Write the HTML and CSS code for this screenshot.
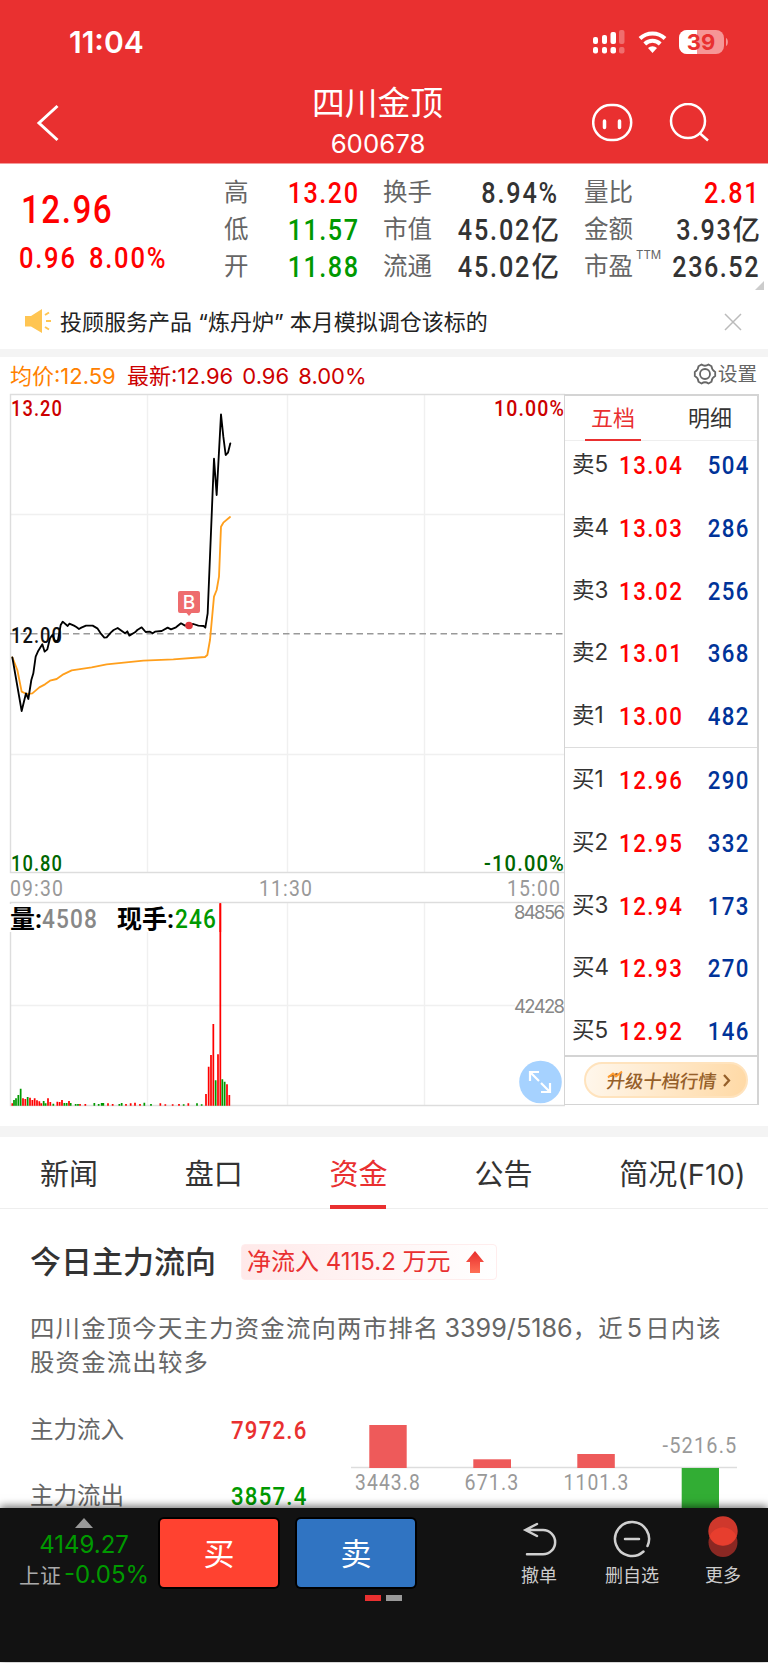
FILE: index.html
```html
<!DOCTYPE html>
<html lang="zh-CN">
<head>
    <meta charset="UTF-8">
    <meta name="viewport" content="width=device-width, initial-scale=1.0">
    <title>四川金顶 600678</title>
    <link rel="stylesheet" href="styles.css">
</head>
<body>
    <header class="header">
        <div class="status">
            <span class="time">11:04</span>
            <svg class="status-icons" width="136" height="26" viewBox="593 29 136 26">
                <g fill="#fff">
                    <rect x="593" y="37" width="5" height="7" rx="2"/>
                    <rect x="602" y="35" width="5" height="9" rx="2"/>
                    <rect x="610.500" y="32" width="5.500" height="12" rx="2"/>
                    <rect x="619" y="30" width="5.500" height="14" rx="2" opacity=".3"/>
                    <rect x="593" y="47" width="5" height="6.500" rx="2"/>
                    <rect x="602" y="47" width="5" height="6.500" rx="2"/>
                    <rect x="610.500" y="47" width="5.500" height="6.500" rx="2"/>
                    <rect x="619" y="47" width="5.500" height="6.500" rx="2" opacity=".3"/>
                    <path d="M652.500 53l-4.500-5a6.500 6.500 0 0 1 9 0z"/>
                </g>
                <path d="M640 38.500a18 18 0 0 1 25 0M644.800 44a11 11 0 0 1 15.400 0" fill="none" stroke="#fff" stroke-width="4"/>
                <rect x="679" y="30" width="45" height="24" rx="8" fill="#f69696"/>
                <path d="M697 30h-10a8 8 0 0 0-8 8v8a8 8 0 0 0 8 8h10z" fill="#fff"/>
                <path d="M726 38c2.500 1 2.500 7 0 8z" fill="#f69696"/>
                <text x="701" y="50" class="battery" text-anchor="middle">39</text>
            </svg>
        </div>
        <div class="nav">
            <svg class="back" width="24" height="38" viewBox="0 0 24 38"><path d="M21.500 2L3 19l18.500 17" fill="none" stroke="#fff" stroke-width="3"/></svg>
            <div class="stock">
                <h1>四川金顶</h1>
                <span>600678</span>
            </div>
            <svg class="nav-icons" width="118" height="40" viewBox="592 103 118 40" fill="none" stroke="#fff" stroke-width="2.500">
                <rect x="593.200" y="105" width="38" height="35" rx="17.500"/>
                <path d="M604.500 121v6.500M619.500 121v6.500" stroke-width="3.500" stroke-linecap="round"/>
                <circle cx="688" cy="121" r="17"/>
                <path d="M699.500 133l8.500 7.500"/>
            </svg>
        </div>
    </header>

    <section class="quote">
        <div class="price">
            <div class="last din">12.96</div>
            <div class="change"><span class="din">0.96</span><span class="din">8.00%</span></div>
        </div>
        <dl class="stats stats-a">
            <dt>高</dt><dd class="din up">13.20</dd>
            <dt>低</dt><dd class="din down">11.57</dd>
            <dt>开</dt><dd class="din down">11.88</dd>
        </dl>
        <dl class="stats stats-b">
            <dt>换手</dt><dd class="din">8.94%</dd>
            <dt>市值</dt><dd class="din">45.02<i>亿</i></dd>
            <dt>流通</dt><dd class="din">45.02<i>亿</i></dd>
        </dl>
        <dl class="stats stats-c">
            <dt>量比</dt><dd class="din up">2.81</dd>
            <dt>金额</dt><dd class="din">3.93<i>亿</i></dd>
            <dt>市盈<sup>TTM</sup></dt><dd class="din">236.52</dd>
        </dl>
        <span class="corner"></span>
    </section>

    <div class="notice">
        <svg width="28" height="26" viewBox="0 0 28 26">
            <path d="M1 7h6l11-7v24l-11-6.500H1z" fill="#ffc552"/>
            <path d="M21 6l4-2.500M22 12h5M21 18l4 2.500" stroke="#ffc552" stroke-width="2"/>
        </svg>
        <p>投顾服务产品 “炼丹炉” 本月模拟调仓该标的</p>
        <svg width="18" height="18" viewBox="0 0 18 18"><path d="M1 1l16 16M17 1L1 17" stroke="#bbb" stroke-width="1.500"/></svg>
    </div>

    <div class="infobar">
        <span class="avg">均价:12.59</span>
        <span class="now">最新:12.96&nbsp; 0.96&nbsp; 8.00%</span>
        <span class="settings">
            <svg width="24" height="24" viewBox="0 0 24 24" fill="none" stroke="#666" stroke-width="1.800">
                <path d="M8.500 2.500q3.500 2.500 7 0l3 1.800q.3 4 3.700 5.700v4q-3.400 1.700-3.700 5.700l-3 1.800q-3.500-2.500-7 0l-3-1.800q-.3-4-3.700-5.700v-4q3.400-1.700 3.700-5.700z"/>
                <circle cx="12" cy="12" r="5"/>
            </svg>
            设置
        </span>
    </div>

    <section class="market">
        <svg class="chart" width="564" height="714" viewBox="0 393 564 714">
            <g class="grid">
                <path d="M147.500 394v479M287.500 394v479M424.500 394v479M10 514.500h555M10 754.500h555M147.500 902v204M287.500 902v204M424.500 902v204M10 1005.500h505"/>
                <path class="frame" d="M565 394.500H10.500V872.500H565M565 902.500H10.500V1105.500H565"/>
            </g>
            <path d="M10 633.800H565" stroke="#999" stroke-width="1.500" stroke-dasharray="6.500 4"/>

            <g class="axis">
                <text x="11" y="416" textLength="52" lengthAdjust="spacingAndGlyphs" fill="#c00">13.20</text>
                <text x="494" y="416" textLength="71" lengthAdjust="spacingAndGlyphs" fill="#c00">10.00%</text>
                <text x="11" y="643" textLength="52" lengthAdjust="spacingAndGlyphs" fill="#111">12.00</text>
                <text x="11" y="870.500" textLength="52" lengthAdjust="spacingAndGlyphs" fill="#060">10.80</text>
                <text x="484" y="870.500" textLength="81" lengthAdjust="spacingAndGlyphs" fill="#060">-10.00%</text>
            </g>
            <g class="axis hours">
                <text x="10" y="896" textLength="54" lengthAdjust="spacingAndGlyphs">09:30</text>
                <text x="259" y="896" textLength="54" lengthAdjust="spacingAndGlyphs">11:30</text>
                <text x="507" y="896" textLength="54" lengthAdjust="spacingAndGlyphs">15:00</text>
            </g>

            <!-- average and price lines -->
            <g transform="translate(0 380) scale(.33333)" fill="none" stroke-width="5.500" stroke-linejoin="round" stroke-linecap="round">
                <path stroke="#ff9f1c" d="M37 832L52 870L65 935L80 942L97 940L118 922L135 913L150 902L170 897L190 883L215 871L275 862L320 853L430 842L520 838L615 831L622 825L630 780L642 650L650 630L657 590L663 440L670 428L690 411"/>
                <path stroke="#000" d="M37 832L65 993L78 940L85 957L94 900L100 880L107 830L115 812L127 793L134 815L142 808L150 775L157 765L166 785L174 780L182 735L188 725L203 738L208 731L222 737L229 741L237 747L244 743L258 737H278L292 745L302 760L313 773L320 772L333 757L341 750L353 744L375 760L382 754L388 767L405 757L412 750L425 742L437 756L450 755L458 760L465 755L485 753L503 743L513 748L528 742L543 730L555 737L568 735L580 732L595 737L611 738L616 743L623 700L642 236L650 345L663 103L670 170L677 225L684 218L691 190"/>
            </g>
            <circle cx="189" cy="625.500" r="3.800" fill="#e03a40"/>
            <path d="M180 591h18q2 0 2 2v18q0 2-2 2h-6.500l-2.500 3-2.500-3H180q-2 0-2-2v-18q0-2 2-2z" fill="#ee6c6e"/>
            <text x="189" y="609" class="marker" text-anchor="middle">B</text>

            <!-- volume -->
            <rect x="9" y="904" width="209" height="28" fill="#fff"/>
            <text x="10" y="928" class="vol"><tspan class="cn">量:</tspan></text>
            <text x="42" y="927.500" class="vol num-part" textLength="56" lengthAdjust="spacingAndGlyphs" fill="#888">4508</text>
            <text x="117" y="928" class="vol"><tspan class="cn">现手:</tspan></text>
            <text x="175" y="927.500" class="vol num-part" textLength="42" lengthAdjust="spacingAndGlyphs" fill="#090">246</text>
            <path d="M220.300 903.300V932" stroke="#f00" stroke-width="1.700"/>
            <text x="514" y="919" class="scale" textLength="51">84856</text>
            <text x="514" y="1013" class="scale" textLength="51">42428</text>
            <g transform="translate(0 840) scale(.33333)" stroke-width="5.200">
                <path stroke="#f00" d="M37 797V790M69 797V775M76 797V777M90 797V773M97 797V780M104 797V775M111 797V781M118 797V784M124 797V790M144 797V775M151 797V786M172 797V785M179 797V786M186 797V780M207 797V783M240 797V792M256 797V792M324 797V790M338 797V792M378 797V792M392 797V790M405 797V788M420 797V792M481 797V790M496 797V793M518 797V793M537 797V792M565 797V790M618 797V762M626 797V680M633 797V645M640 797V552M654 797V643M661 797V190M681 797V733M688 797V765"/>
                <path stroke="#090" d="M42 797V780M48 797V775M55 797V765M62 797V746M83 797V771M131 797V783M137 797V790M160 797V791M193 797V789M200 797V789M212 797V789M227 797V792M234 797V792M283 797V789M296 797V792M305 797V789M310 797V789M358 797V792M365 797V789M433 797V788M453 797V792M551 797V793M591 797V790M605 797V793M647 797V721M667 797V718M674 797V725"/>
            </g>

            <circle cx="540.500" cy="1082" r="21.300" fill="#a6d2ff"/>
            <path d="M530 1081v-9h9M530 1072l9 9M541 1083l9 9M541 1092h9v-9" fill="none" stroke="#fff" stroke-width="2.200"/>
        </svg>

        <div class="book">
            <div class="book-tabs"><span class="active">五档</span><span>明细</span></div>
            <ul class="asks">
                <li><span>卖5</span><b class="din">13.04</b><em class="din">504</em></li>
                <li><span>卖4</span><b class="din">13.03</b><em class="din">286</em></li>
                <li><span>卖3</span><b class="din">13.02</b><em class="din">256</em></li>
                <li><span>卖2</span><b class="din">13.01</b><em class="din">368</em></li>
                <li><span>卖1</span><b class="din">13.00</b><em class="din">482</em></li>
            </ul>
            <ul class="bids">
                <li><span>买1</span><b class="din">12.96</b><em class="din">290</em></li>
                <li><span>买2</span><b class="din">12.95</b><em class="din">332</em></li>
                <li><span>买3</span><b class="din">12.94</b><em class="din">173</em></li>
                <li><span>买4</span><b class="din">12.93</b><em class="din">270</em></li>
                <li><span>买5</span><b class="din">12.92</b><em class="din">146</em></li>
            </ul>
            <div class="upgrade">
                <div class="upgrade-btn">
                    <span>升级十档行情</span>
                    <svg width="8" height="13" viewBox="0 0 8 13"><path d="M1 1l5 5.500-5 5.500" fill="none" stroke="#96602a" stroke-width="2.300"/></svg>
                    <svg class="spark" width="17" height="9" viewBox="0 0 17 9"><path d="M1 7.500l5-4 3 3 6-5" fill="none" stroke="#ff9a2e" stroke-width="2"/></svg>
                </div>
            </div>
        </div>
    </section>

    <nav class="tabs">
        <span>新闻</span>
        <span>盘口</span>
        <span class="active">资金</span>
        <span>公告</span>
        <span>简况(F10)</span>
    </nav>

    <section class="flow">
        <div class="flow-head">
            <h2>今日主力流向</h2>
            <div class="badge">
                <span>净流入 4115.2 万元</span>
                <svg width="20" height="24" viewBox="0 0 20 24">
                    <defs><linearGradient id="arrow" x2="0" y2="1"><stop stop-color="#e82c2c"/><stop offset="1" stop-color="#ff6f55"/></linearGradient></defs>
                    <path d="M10 1l9 11h-4v11H5V12H1z" fill="url(#arrow)"/>
                </svg>
            </div>
        </div>
        <p class="summary">四川金顶今天主力资金流向两市排名<span class="num">3399/5186</span>，近<span class="num five">5</span>日内该<br>股资金流出较多</p>
        <div class="flow-body">
            <div class="flow-rows">
                <div class="flow-row"><span>主力流入</span><b class="din in">7972.6</b></div>
                <div class="flow-row"><span>主力流出</span><b class="din out">3857.4</b></div>
            </div>
            <svg class="bars" width="388" height="100" viewBox="351 1410 388 100">
                <path d="M352 1468.500h386" stroke="#ddd" stroke-width="1.500"/>
                <g fill="#ee5a5a">
                    <rect x="370.300" y="1426" width="37.400" height="43"/>
                    <rect x="474.300" y="1460.300" width="37.700" height="8.700"/>
                    <rect x="578.300" y="1455" width="37.500" height="14"/>
                </g>
                <rect x="682.700" y="1469" width="37.300" height="41" fill="#32ad34"/>
                <g class="axis hours">
                    <text x="356" y="1491" textLength="66" lengthAdjust="spacingAndGlyphs">3443.8</text>
                    <text x="465.500" y="1491" textLength="55" lengthAdjust="spacingAndGlyphs">671.3</text>
                    <text x="564.500" y="1491" textLength="66" lengthAdjust="spacingAndGlyphs">1101.3</text>
                    <text x="663.500" y="1454" textLength="75" lengthAdjust="spacingAndGlyphs">-5216.5</text>
                </g>
            </svg>
        </div>
    </section>

    <footer class="toolbar">
        <div class="index">
            <svg width="18" height="10" viewBox="0 0 18 10"><path d="M9 0l9 10H0z" fill="#999"/></svg>
            <div class="index-value">4149.27</div>
            <div class="index-change"><span>上证</span>-0.05%</div>
        </div>
        <div class="trade buy">买</div>
        <div class="trade sell">卖</div>
        <div class="tool undo">
            <svg width="40" height="40" viewBox="0 0 40 40" fill="none" stroke="#d0d0d0" stroke-width="2.500" stroke-linecap="round"><path d="M18 5L6.500 11 18 17M7 11h17a12 12 0 0 1 0 24.300H8"/></svg>
            撤单
        </div>
        <div class="tool remove">
            <svg width="40" height="40" viewBox="0 0 40 40" fill="none" stroke="#d0d0d0" stroke-width="2.500" stroke-linecap="round"><path d="M35.500 27A17 17 0 1 0 31.500 32.500M13 20h14"/></svg>
            删自选
        </div>
        <div class="tool more">
            <svg width="40" height="42" viewBox="0 0 40 42"><circle cx="20" cy="26.500" r="14.500" fill="#8a2823"/><circle cx="20" cy="15" r="14.700" fill="#cf382c"/><path d="M6.500 20.500a14.500 14.500 0 0 1 27 0 14.700 14.700 0 0 1-27 0z" fill="#e73e2e"/></svg>
            更多
        </div>
        <div class="pager"><i class="on"></i><i></i></div>
    </footer>
</body>
</html>
```
FILE: styles.css
```css
* {
    box-sizing: border-box;
    margin: 0;
    padding: 0;
}
body {
    position: relative;
    width: 768px;
    height: 1663px;
    overflow: hidden;
    background: #fff;
    color: #333;
    font-family: Inter, "Noto Sans CJK SC", sans-serif;
}
svg {
    display: block;
    flex-shrink: 0;
}
ul {
    list-style: none;
}
i, em {
    font-style: normal;
}
.din {
    display: block;
    font-family: Roboto, "Noto Sans CJK SC", sans-serif;
    font-weight: 500;
    letter-spacing: 1.8px;
    white-space: nowrap;
    transform: scaleX(.84);
    transform-origin: left center;
}
.up {
    color: #f00;
}
.down {
    color: #090;
}

/* header */
.header {
    height: 164px;
    background: #e93030;
    color: #fff;
    border-bottom: 1px solid #f49a9a;
}
.status {
    display: flex;
    justify-content: space-between;
    height: 82px;
    padding: 29px 39px 0 69px;
}
.time {
    font-size: 30px;
    font-weight: 600;
    line-height: 26px;
}
.battery {
    font-size: 22px;
    font-weight: 700;
    fill: #e93030;
}
.nav {
    display: grid;
    grid-template-columns: 200px 1fr 200px;
    padding: 0 0 0 36px;
}
.back {
    margin-top: 22px;
}
.stock {
    padding-right: 49px;
    text-align: center;
}
.stock h1 {
    font-size: 32.800px;
    font-weight: 400;
    line-height: 42px;
    white-space: nowrap;
}
.stock span {
    display: block;
    padding-left: 1px;
    font-size: 25.800px;
    line-height: 39px;
}
.nav-icons {
    margin: 21px 0 0 24px;
}

/* quote */
.quote {
    position: relative;
    display: flex;
    height: 128px;
}
.price {
    width: 224px;
    padding: 24px 0 0 21px;
    color: #f00;
}
.last {
    font-size: 39.500px;
    line-height: 43px;
}
.change {
    display: flex;
    gap: 8px;
    margin: 11px 0 0 -2px;
    font-size: 29px;
    line-height: 32px;
}
.change .din {
    letter-spacing: 2px;
    transform: scaleX(.88);
}
.change .din:first-child {
    width: 62px;
}
.stats {
    display: grid;
    grid-template-columns: auto 1fr;
    grid-auto-rows: 37.200px;
    margin-top: 10px;
    line-height: 37px;
}
.stats dt {
    position: relative;
    color: #666;
    font-size: 24.500px;
}
.stats dd {
    font-size: 30px;
    text-align: right;
    transform-origin: right center;
}
.stats i {
    display: inline-block;
    font-size: 28px;
    line-height: 30px;
    letter-spacing: 0;
    transform: scaleX(1.17);
    transform-origin: right center;
    margin-left: 5px;
}
.stats-a {
    width: 135px;
}
.stats-b {
    width: 176px;
    margin-left: 24px;
}
.stats-b .din {
    letter-spacing: 2.200px;
}
.stats-c {
    width: 176px;
    margin-left: 25px;
}
.stats sup {
    position: absolute;
    left: 52px;
    top: -3px;
    font-size: 11.500px;
    line-height: 20px;
}
.corner {
    position: absolute;
    right: 4px;
    bottom: 2px;
    border-left: 9px solid transparent;
    border-bottom: 9px solid #ccc;
}

/* notice */
.notice {
    display: flex;
    align-items: center;
    height: 65px;
    padding: 2px 26px 0 24px;
    border-bottom: 8px solid #f4f4f4;
}
.notice p {
    flex: 1;
    padding-left: 8px;
    font-size: 22px;
    line-height: 30px;
    color: #222;
    white-space: nowrap;
}
.infobar {
    display: flex;
    align-items: center;
    height: 36px;
    padding: 0 11px 2px 10px;
    font-size: 22px;
}
.avg {
    width: 117px;
    color: #ff8000;
}
.now {
    color: #c00;
    word-spacing: -1.600px;
}
.settings {
    display: flex;
    align-items: center;
    gap: 1px;
    margin-left: auto;
    margin-top: -1px;
    color: #666;
    font-size: 19.500px;
    line-height: 28px;
}

/* chart */
.market {
    display: flex;
    height: 744px;
    border-bottom: 11px solid #f4f4f4;
}
.chart {
    overflow: visible;
}
.grid path {
    fill: none;
    stroke: #f0f0f0;
    stroke-width: 1.400;
}
.grid .frame {
    stroke: #ddd;
}
.axis text {
    font-family: Roboto, sans-serif;
    font-size: 22.500px;
    font-weight: 500;
    letter-spacing: 1.300px;
}
.hours text {
    fill: #999;
    font-weight: 450;
}
.marker {
    font-size: 19px;
    font-weight: 500;
    fill: #fff;
}
.vol {
    font-family: Roboto, "Noto Sans CJK SC", sans-serif;
    font-size: 26px;
    font-weight: 500;
}
.num-part {
    letter-spacing: 1.300px;
}
.vol .cn {
    font-size: 25px;
    font-weight: 700;
}
.scale {
    font-size: 18.500px;
    fill: #888;
}
.book {
    width: 195px;
    height: 711px;
    margin-top: 1px;
    border: 2px solid #d4d4d4;
    border-left-width: 1px;
    border-bottom-width: 1px;
}
.book-tabs {
    display: flex;
    justify-content: space-between;
    height: 45px;
    padding: 0 19px 0 20px;
    border-bottom: 1px solid #eee;
    font-size: 22px;
    line-height: 45px;
}
.book-tabs span {
    width: 56px;
    height: 45px;
    text-align: center;
}
.book-tabs .active {
    color: #e93030;
    border-bottom: 2px solid #e93030;
}
.asks {
    height: 307px;
    padding-top: 3px;
    border-bottom: 1px solid #ddd;
}
.bids {
    height: 309px;
    padding-top: 11px;
    border-bottom: 2px solid #d4d4d4;
}
.book li {
    display: grid;
    grid-template-columns: 47px 80px 1fr;
    height: 62.800px;
    padding: 0 6px 0 7px;
    line-height: 42px;
}
.book li span {
    font-size: 22.500px;
    line-height: 40px;
    white-space: nowrap;
}
.book .din {
    font-size: 26.500px;
}
.book li b {
    color: #f00;
}
.book li em {
    padding-right: 5px;
    color: #039;
    letter-spacing: 1.600px;
    text-align: right;
    transform-origin: right center;
}
.upgrade {
    padding: 5px 0 0 19px;
}
.upgrade-btn {
    position: relative;
    display: flex;
    align-items: center;
    gap: 6px;
    width: 164px;
    height: 36px;
    padding-left: 21px;
    border: 2px solid #ffe3bd;
    border-radius: 18px;
    background: linear-gradient(100deg, #fff7ec, #ffd9a5);
    color: #96602a;
    font-size: 18.300px;
    font-weight: 500;
    white-space: nowrap;
}
.upgrade-btn span {
    transform: skewX(-8deg);
}
.spark {
    position: absolute;
    left: 21px;
    top: 6px;
}

/* tabs */
.tabs {
    display: flex;
    height: 72px;
    padding-left: 40px;
    border-bottom: 1px solid #eee;
    font-size: 29px;
    line-height: 75px;
    white-space: nowrap;
}
.tabs span {
    position: relative;
    width: 144.800px;
    height: 71px;
}
.tabs .active {
    color: #e93030;
}
.tabs .active::after {
    content: "";
    position: absolute;
    left: 0;
    bottom: -1px;
    width: 56px;
    height: 4px;
    background: #e93030;
}

/* capital flow */
.flow {
    padding: 35px 30px 0;
}
.flow-head {
    display: flex;
    align-items: center;
    height: 36px;
}
.flow-head h2 {
    width: 211px;
    font-size: 31px;
    font-weight: 500;
    line-height: 36px;
    white-space: nowrap;
}
.badge {
    display: flex;
    align-items: center;
    gap: 14px;
    height: 36px;
    width: 256px;
    padding-left: 5px;
    border: 1px solid #ffeded;
    border-radius: 4px;
    background: linear-gradient(90deg, #ffe9e9, #fff);
    color: #e93030;
    font-size: 24px;
    line-height: 34px;
    white-space: nowrap;
}
.summary {
    margin-top: 32px;
    color: #666;
    font-size: 24.400px;
    line-height: 33.700px;
    letter-spacing: 1.200px;
    white-space: nowrap;
}
.num {
    margin: 0 0 0 5px;
    font-size: 25.200px;
    line-height: 24px;
    letter-spacing: 0;
}
.five {
    margin: 0 3px;
}
.flow-body {
    display: flex;
    margin-top: 30px;
}
.flow-rows {
    width: 322px;
}
.flow-row {
    display: flex;
    height: 66px;
    line-height: 42px;
    color: #666;
}
.flow-row span {
    width: 201px;
    font-size: 23.500px;
}
.flow-row .din {
    font-size: 26.500px;
    letter-spacing: 1.400px;
}
.flow-row .in {
    color: #e93030;
}
.flow-row .out {
    color: #090;
}

/* bottom toolbar */
.toolbar {
    position: absolute;
    left: 0;
    top: 1508px;
    display: flex;
    width: 768px;
    height: 154px;
    background: #121212;
    box-shadow: 0 -2px 8px rgba(0, 0, 0, .55);
    color: #ccc;
}
.index {
    display: flex;
    flex-direction: column;
    align-items: center;
    width: 168px;
    padding-top: 10px;
    margin-right: -8px;
    color: #090;
    font-size: 24px;
}
.index-value {
    margin-top: 2px;
    line-height: 30px;
}
.index-change {
    line-height: 30px;
    white-space: nowrap;
}
.index-change span {
    margin-right: 3px;
    color: #aaa;
    font-size: 21px;
}
.trade {
    width: 118px;
    height: 68px;
    margin-top: 11px;
    border-radius: 4px;
    box-shadow: 0 0 0 2px #000;
    color: #fff;
    font-size: 31px;
    line-height: 70px;
    text-align: center;
}
.buy {
    background: #ff4230;
    margin-right: 19px;
}
.sell {
    background: #3074c2;
}
.tool {
    display: flex;
    flex-direction: column;
    align-items: center;
    width: 80px;
    height: 90px;
    padding-top: 11px;
    font-size: 18px;
    line-height: 34px;
}
.undo {
    margin-left: 84px;
}
.remove {
    margin-left: 13px;
}
.more {
    margin-left: 11px;
    padding-top: 8px;
    line-height: 36px;
}
.pager {
    position: absolute;
    left: 365px;
    top: 87px;
    display: flex;
    gap: 5px;
}
.pager i {
    width: 16px;
    height: 6px;
    background: #999;
}
.pager .on {
    background: #e93030;
}
```
